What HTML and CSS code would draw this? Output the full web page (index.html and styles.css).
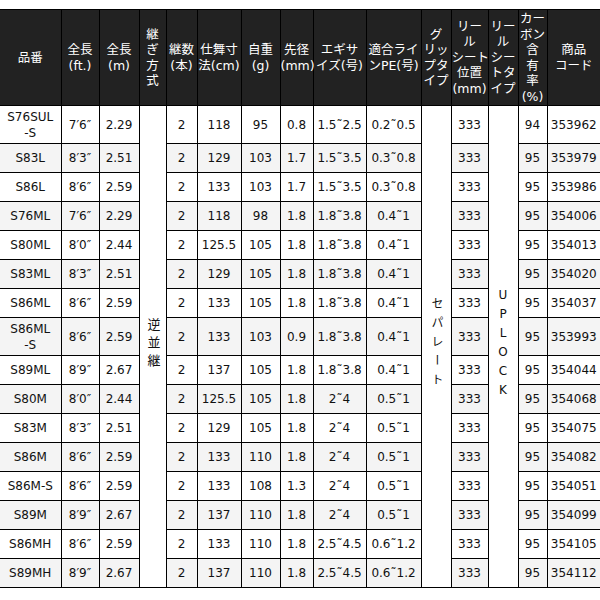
FILE: index.html
```html
<!DOCTYPE html>
<html lang="ja">
<head>
<meta charset="utf-8">
<title>スペック表</title>
<link rel="stylesheet" href="styles.css">
</head>
<body>
<table class="spec">
  <colgroup>
    <col class="c1"><col class="c2"><col class="c3"><col class="c4"><col class="c5">
    <col class="c6"><col class="c7"><col class="c8"><col class="c9"><col class="c10">
    <col class="c11"><col class="c12"><col class="c13"><col class="c14"><col class="c15">
  </colgroup>
  <thead>
    <tr>
      <th>品番</th>
      <th>全長<br>(ft.)</th>
      <th>全長<br>(m)</th>
      <th>継<br>ぎ<br>方<br>式</th>
      <th>継数<br>(本)</th>
      <th>仕舞寸<br>法(cm)</th>
      <th>自重<br>(g)</th>
      <th>先径<br>(mm)</th>
      <th>エギサ<br>イズ(号)</th>
      <th>適合ライ<br>ンPE(号)</th>
      <th>グ<br>リッ<br>プタ<br>イプ</th>
      <th>リー<br>ル<br>シート<br>位置<br>(mm)</th>
      <th>リー<br>ル<br>シー<br>トタ<br>イプ</th>
      <th>カー<br>ボン<br>含<br>有<br>率<br>(%)</th>
      <th>商品<br>コード</th>
    </tr>
  </thead>
  <tbody>
    <tr class="tall">
      <td>S76SUL<br>-S</td><td>7′6″</td><td>2.29</td>
      <td class="merge" rowspan="16"><span class="vert v-join">逆並継</span></td>
      <td>2</td><td>118</td><td>95</td><td>0.8</td><td>1.5˜2.5</td><td>0.2˜0.5</td>
      <td class="merge" rowspan="16"><span class="vert v-grip">セパレート</span></td>
      <td>333</td>
      <td class="merge" rowspan="16"><span class="vert v-reel">UPLOCK</span></td>
      <td>94</td><td>353962</td>
    </tr>
    <tr><td>S83L</td><td>8′3″</td><td>2.51</td><td>2</td><td>129</td><td>103</td><td>1.7</td><td>1.5˜3.5</td><td>0.3˜0.8</td><td>333</td><td>95</td><td>353979</td></tr>
    <tr><td>S86L</td><td>8′6″</td><td>2.59</td><td>2</td><td>133</td><td>103</td><td>1.7</td><td>1.5˜3.5</td><td>0.3˜0.8</td><td>333</td><td>95</td><td>353986</td></tr>
    <tr><td>S76ML</td><td>7′6″</td><td>2.29</td><td>2</td><td>118</td><td>98</td><td>1.8</td><td>1.8˜3.8</td><td>0.4˜1</td><td>333</td><td>95</td><td>354006</td></tr>
    <tr><td>S80ML</td><td>8′0″</td><td>2.44</td><td>2</td><td>125.5</td><td>105</td><td>1.8</td><td>1.8˜3.8</td><td>0.4˜1</td><td>333</td><td>95</td><td>354013</td></tr>
    <tr><td>S83ML</td><td>8′3″</td><td>2.51</td><td>2</td><td>129</td><td>105</td><td>1.8</td><td>1.8˜3.8</td><td>0.4˜1</td><td>333</td><td>95</td><td>354020</td></tr>
    <tr><td>S86ML</td><td>8′6″</td><td>2.59</td><td>2</td><td>133</td><td>105</td><td>1.8</td><td>1.8˜3.8</td><td>0.4˜1</td><td>333</td><td>95</td><td>354037</td></tr>
    <tr class="tall"><td>S86ML<br>-S</td><td>8′6″</td><td>2.59</td><td>2</td><td>133</td><td>103</td><td>0.9</td><td>1.8˜3.8</td><td>0.4˜1</td><td>333</td><td>95</td><td>353993</td></tr>
    <tr><td>S89ML</td><td>8′9″</td><td>2.67</td><td>2</td><td>137</td><td>105</td><td>1.8</td><td>1.8˜3.8</td><td>0.4˜1</td><td>333</td><td>95</td><td>354044</td></tr>
    <tr><td>S80M</td><td>8′0″</td><td>2.44</td><td>2</td><td>125.5</td><td>105</td><td>1.8</td><td>2˜4</td><td>0.5˜1</td><td>333</td><td>95</td><td>354068</td></tr>
    <tr><td>S83M</td><td>8′3″</td><td>2.51</td><td>2</td><td>129</td><td>105</td><td>1.8</td><td>2˜4</td><td>0.5˜1</td><td>333</td><td>95</td><td>354075</td></tr>
    <tr><td>S86M</td><td>8′6″</td><td>2.59</td><td>2</td><td>133</td><td>110</td><td>1.8</td><td>2˜4</td><td>0.5˜1</td><td>333</td><td>95</td><td>354082</td></tr>
    <tr><td>S86M-S</td><td>8′6″</td><td>2.59</td><td>2</td><td>133</td><td>108</td><td>1.3</td><td>2˜4</td><td>0.5˜1</td><td>333</td><td>95</td><td>354051</td></tr>
    <tr><td>S89M</td><td>8′9″</td><td>2.67</td><td>2</td><td>137</td><td>110</td><td>1.8</td><td>2˜4</td><td>0.5˜1</td><td>333</td><td>95</td><td>354099</td></tr>
    <tr><td>S86MH</td><td>8′6″</td><td>2.59</td><td>2</td><td>133</td><td>110</td><td>1.8</td><td>2.5˜4.5</td><td>0.6˜1.2</td><td>333</td><td>95</td><td>354105</td></tr>
    <tr><td>S89MH</td><td>8′9″</td><td>2.67</td><td>2</td><td>137</td><td>110</td><td>1.8</td><td>2.5˜4.5</td><td>0.6˜1.2</td><td>333</td><td>95</td><td>354112</td></tr>
  </tbody>
</table>
</body>
</html>
```
FILE: styles.css
```css
html, body {
  margin: 0;
  background: #fff;
}
body {
  padding-top: 9px;
  font-family: "DejaVu Sans", "Noto Sans CJK JP", sans-serif;
  font-size: 12px;
  color: #111;
}
.spec {
  border-collapse: collapse;
  table-layout: fixed;
  width: 600px;
}
.c1 { width: 61px; }
.c2 { width: 38px; }
.c3 { width: 40px; }
.c4 { width: 27px; }
.c5 { width: 31px; }
.c6 { width: 44px; }
.c7 { width: 39px; }
.c8 { width: 33px; }
.c9 { width: 53px; }
.c10 { width: 55px; }
.c11 { width: 30px; }
.c12 { width: 37px; }
.c13 { width: 30px; }
.c14 { width: 29px; }
.c15 { width: 53px; }

.spec th,
.spec td {
  border: 1px solid #000;
  padding: 0;
  text-align: center;
  vertical-align: middle;
  white-space: nowrap;
  overflow: visible;
}
.spec tr > :first-child { border-left: 0; }
.spec tr > :last-child { border-right: 0; }

.spec th {
  background: #222;
  color: #fff;
  font-weight: normal;
  font-size: 12.5px;
  line-height: 15.5px;
  height: 95px;
}
.spec td {
  height: 28px;
  line-height: 16px;
  background: #fff;
}
.spec tr.tall td { height: 37px; }
.spec tbody tr:nth-child(even) td { background: #f4f4f4; }
.spec tbody td.merge { background: #fff; }

.vert {
  display: inline-block;
  writing-mode: vertical-rl;
  text-orientation: upright;
}
.v-join { font-size: 13px; letter-spacing: 5px; }
.v-grip { font-size: 12px; letter-spacing: 7px; }
.v-reel { font-size: 12px; letter-spacing: 5px; }
```
